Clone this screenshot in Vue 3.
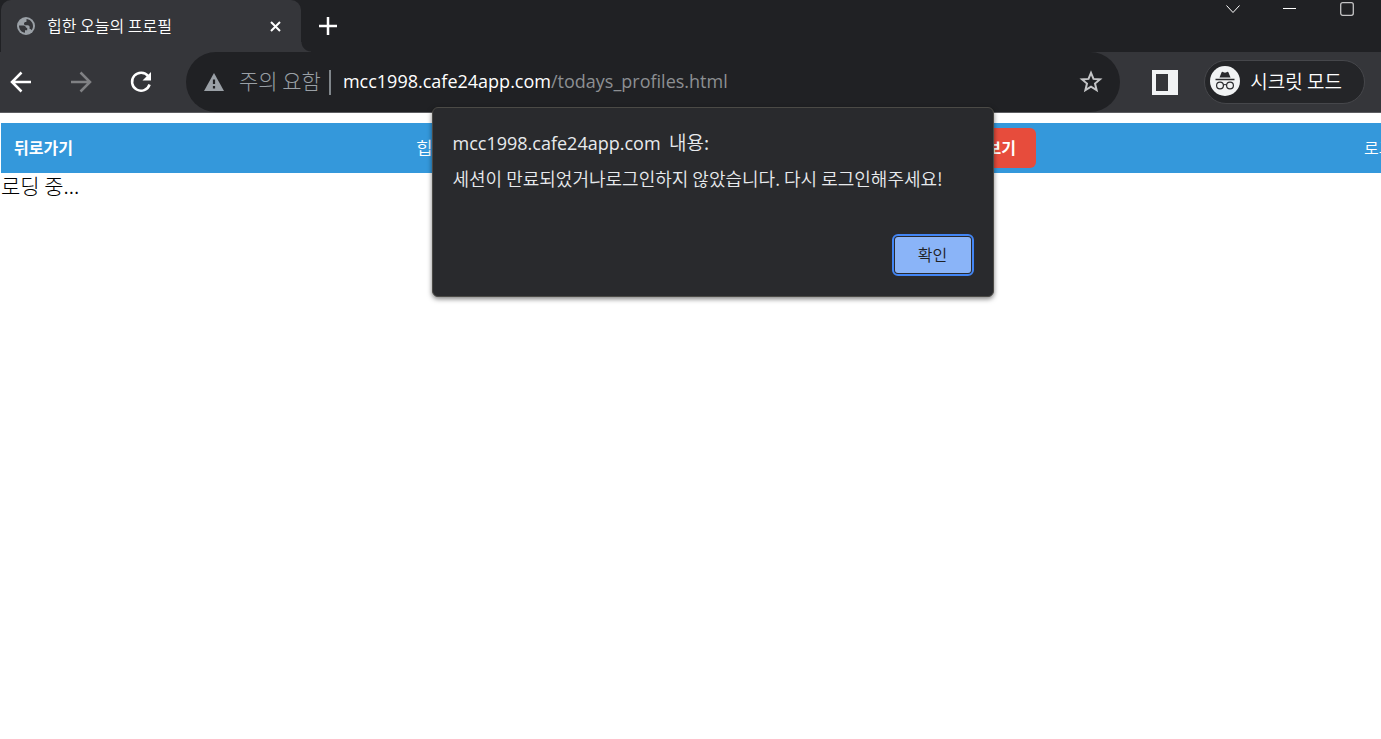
<template>
    <div class="browser">
        <header class="tab-strip">
            <div class="tab">
                <svg class="globe" viewBox="0 0 18 18" aria-hidden="true">
                    <circle cx="9" cy="9" r="9" fill="#9aa0a6" />
                    <path d="M2 8.500h4.500c1.500 0 2.500 1 2.500 2.300h1.200v2.400H8v2.600C4.600 15.500 2 12.500 2 8.500z" fill="#35363a" />
                    <path d="M9.500 2c3.500.2 6.500 3.200 6.500 7 0 1.600-.5 3-1.400 4.200-.3-.8-1-1.300-2-1.300V10c0-1-.8-1.800-1.800-1.800H8.500C7.500 8.200 7 7.500 7 6.700c0-1 .7-1.700 1.700-1.700.6 0 .8-.4.800-1z" fill="#35363a" />
                </svg>
                <span class="tab-title">{{ title }}</span>
                <button class="icon-button tab-close" aria-label="탭 닫기">
                    <svg width="11" height="11" viewBox="0 0 11 11"><path d="M1 1l9 9M10 1l-9 9" stroke="#fff" stroke-width="2" /></svg>
                </button>
            </div>
            <button class="icon-button new-tab" aria-label="새 탭">
                <svg width="18" height="18" viewBox="0 0 18 18"><path d="M9 0v18M0 9h18" stroke="#fff" stroke-width="2.500" /></svg>
            </button>
            <div class="window-controls">
                <button class="icon-button" aria-label="탭 검색">
                    <svg width="14" height="14" viewBox="0 0 14 14"><path d="M.5 3.500l6.500 7 6.500-7" fill="none" stroke="#fff" /></svg>
                </button>
                <button class="icon-button" aria-label="최소화">
                    <svg width="14" height="14" viewBox="0 0 14 14"><path d="M0 6.500h13" stroke="#fff" /></svg>
                </button>
                <button class="icon-button" aria-label="최대화">
                    <svg width="14" height="14" viewBox="0 0 14 14"><rect x=".7" y=".7" width="12.600" height="12.600" rx="2" fill="none" stroke="#c4c4c5" stroke-width="1.300" /></svg>
                </button>
            </div>
        </header>

        <div class="toolbar">
            <div class="history">
                <button class="icon-button" aria-label="뒤로">
                    <svg width="22" height="22" viewBox="0 0 22 22"><path d="M21 11H2.500M11.500 1.500L2 11l9.500 9.500" fill="none" stroke="#fff" stroke-width="2.500" /></svg>
                </button>
                <button class="icon-button" aria-label="앞으로" disabled>
                    <svg width="22" height="22" viewBox="0 0 22 22"><path d="M1 11h18.500M10.500 1.500L20 11l-9.500 9.500" fill="none" stroke="#808184" stroke-width="2.500" /></svg>
                </button>
                <button class="icon-button" aria-label="새로고침">
                    <svg width="22" height="22" viewBox="0 0 22 22">
                        <path d="M18.200 5.200A9 9 0 1 0 19.600 13.500" fill="none" stroke="#fff" stroke-width="2.500" />
                        <path d="M21 1v8.500h-8.500z" fill="#fff" />
                    </svg>
                </button>
            </div>
            <div class="address-bar">
                <svg class="warning" width="20" height="18" viewBox="0 0 20 18" aria-hidden="true">
                    <path d="M10 0l10 18H0z" fill="#9aa0a6" />
                    <path d="M10 6.500v4.500M10 13v2.500" stroke="#202124" stroke-width="2.200" />
                </svg>
                <span class="security">주의 요함</span>
                <span class="divider"></span>
                <span class="url">{{ host }}<span class="path">/todays_profiles.html</span></span>
                <button class="icon-button" aria-label="북마크에 추가">
                    <svg width="24" height="24" viewBox="0 0 24 24"><path d="M12 2.800l2.500 6.100 6.500.5-5 4.200 1.600 6.500L12 16.600l-5.600 3.500L8 13.600 3 9.400l6.500-.5z" fill="none" stroke="#c4c5c7" stroke-width="2" /></svg>
                </button>
            </div>
            <button class="icon-button side-panel" aria-label="측면 패널">
                <svg width="26" height="25" viewBox="0 0 26 25"><path d="M0 0h26v25H0zM4 4v17h12V4z" fill="#f1f3f4" fill-rule="evenodd" /></svg>
            </button>
            <button class="incognito">
                <svg width="30" height="30" viewBox="0 0 30 30" aria-hidden="true">
                    <circle cx="15" cy="15" r="15" fill="#f1f3f4" />
                    <path d="M9.500 11.500l2-5c.2-.6.700-.8 1.300-.6l2.200.8 2.200-.8c.6-.2 1.100 0 1.300.6l2 5z" fill="#292a2d" />
                    <path d="M5.500 13.500h19" stroke="#292a2d" stroke-width="1.500" />
                    <g fill="none" stroke="#292a2d" stroke-width="1.200">
                        <circle cx="10" cy="19.500" r="3.400" />
                        <circle cx="20" cy="19.500" r="3.400" />
                        <path d="M13.400 19q1.600-1 3.200 0" />
                    </g>
                </svg>
                시크릿 모드
            </button>
        </div>

        <main class="page">
            <nav class="site-nav">
                <a href="#" class="back">뒤로가기</a>
                <span class="heading">{{ title }}</span>
                <button class="view">프로필 보기</button>
                <a href="#" class="logout">로그아웃</a>
            </nav>
            <p class="loading">로딩 중...</p>
        </main>

        <div v-if="alertOpen" class="alert" role="alertdialog" aria-labelledby="alert-title" aria-describedby="alert-text">
            <h1 id="alert-title"><span class="host">{{ host }}</span>&nbsp; 내용:</h1>
            <p id="alert-text">세션이 만료되었거나로그인하지 않았습니다. 다시 로그인해주세요!</p>
            <button class="confirm" @click="alertOpen = false">확인</button>
        </div>
    </div>
</template>

<script setup>
import { ref } from 'vue'

const title = '힙한 오늘의 프로필'
const host = 'mcc1998.cafe24app.com'
const alertOpen = ref(true)
</script>

<style>
body {
    margin: 0;
    background: #fff;
}
</style>

<style scoped>
.browser {
    position: relative;
    min-height: 100vh;
    overflow: hidden;
    font-family: "Noto Sans CJK KR", sans-serif;
    font-weight: 350;
    color: #fff;
}
button {
    font-family: inherit;
    font-weight: inherit;
    cursor: pointer;
}
svg {
    display: block;
}
.icon-button {
    padding: 0;
    border: 0;
    background: none;
}
.tab-strip {
    display: flex;
    height: 52px;
    background: #202124;
}
.tab {
    position: relative;
    display: flex;
    align-items: center;
    box-sizing: border-box;
    width: 300px;
    margin-left: 1px;
    padding: 0 20px 0 16px;
    border-radius: 10px 10px 0 0;
    background: #35363a;
}
/* curved foot of the active tab */
.tab::after {
    content: "";
    position: absolute;
    bottom: 0;
    left: 100%;
    width: 10px;
    height: 10px;
    background: radial-gradient(circle at 100% 0, transparent 9px, #35363a 10px);
}
.globe {
    width: 18px;
    height: 18px;
}
.tab-title {
    flex: 1;
    margin-left: 12px;
    padding-bottom: 2px;
    font-size: 16px;
    line-height: 24px;
}
.new-tab {
    align-self: center;
    margin-left: 18px;
}
.window-controls {
    display: flex;
    align-items: flex-start;
    gap: 43px;
    margin-left: auto;
    padding: 2px 27px 0 0;
}
.toolbar {
    display: flex;
    align-items: center;
    height: 60px;
    padding: 0 16px 0 10px;
    border-bottom: 1px solid #5c5d61;
    background: #35363a;
}
.history {
    display: flex;
    gap: 38px;
    margin-right: 34px;
}
.address-bar {
    display: flex;
    flex: 1;
    align-items: center;
    box-sizing: border-box;
    height: 60px;
    padding: 0 17px 0 18px;
    border-radius: 30px;
    background: #202124;
    white-space: nowrap;
}
.security {
    margin-left: 15px;
    padding-bottom: 4px;
    font-size: 21px;
    font-weight: 300;
    color: #9aa0a6;
}
.divider {
    width: 2px;
    height: 25px;
    margin: 0 12px 0 8px;
    background: #80868b;
}
.url {
    flex: 1;
    padding-bottom: 2px;
    font-family: "Open Sans", "Noto Sans CJK KR", sans-serif;
    font-size: 18px;
    font-weight: 400;
}
.path {
    color: #8c8f92;
}
.side-panel {
    margin: 0 26px 0 32px;
}
.incognito {
    display: flex;
    align-items: center;
    gap: 10px;
    height: 44px;
    padding: 0 22px 2px 5px;
    border: 1px solid #46474b;
    border-radius: 22px;
    background: #242528;
    color: #fff;
    font-size: 19px;
    line-height: 24px;
    white-space: nowrap;
}
.page {
    padding: 10px 0 0 1px;
    color: #000;
}
.site-nav {
    display: grid;
    grid-template-columns: 402fr 620fr 389fr;
    grid-template-areas: "back view logout";
    align-items: center;
    box-sizing: border-box;
    height: 50px;
    margin-right: -44px;
    padding: 0 0 0 13px;
    background: #3498db;
    font-size: 16px;
    line-height: 22px;
    color: #fff;
    white-space: nowrap;
}
.site-nav a {
    padding-bottom: 2px;
    color: #fff;
    text-decoration: none;
}
.site-nav .back {
    grid-area: back;
    font-weight: 700;
}
.heading {
    grid-area: view;
    padding-bottom: 2px;
    font-size: 18px;
}
.view {
    grid-area: view;
    justify-self: end;
    height: 40px;
    padding: 0 20px 2px;
    border: 0;
    border-radius: 6px;
    background: #e74c3c;
    font-size: 16px;
    font-weight: 700;
    color: #fff;
}
.site-nav .logout {
    grid-area: logout;
    justify-self: end;
    padding-right: 2px;
}
.loading {
    margin: 0;
    font-size: 21px;
    font-weight: 300;
    line-height: 24px;
}
.alert {
    position: absolute;
    top: 107px;
    left: calc(50% + 22px);
    display: flex;
    flex-direction: column;
    box-sizing: border-box;
    width: 562px;
    padding: 20px;
    border: 1px solid #4b4a46;
    border-radius: 6px;
    background: #292a2d;
    box-shadow: 0 2px 5px rgba(0, 0, 0, 0.5);
    color: #e8eaed;
    transform: translateX(-50%);
}
.alert h1 {
    margin: 0;
    font-size: 19px;
    font-weight: 350;
    line-height: 28px;
}
.host {
    font-family: "Open Sans", sans-serif;
    font-size: 18px;
    font-weight: 400;
}
.alert p {
    margin: 8px 0 46px;
    font-size: 18px;
    line-height: 26px;
    white-space: nowrap;
}
.confirm {
    align-self: flex-end;
    width: 76px;
    height: 36px;
    margin: 0 2px 3px 0;
    padding: 0 0 2px;
    border: 0;
    border-radius: 3px;
    outline: 2px solid #4285f4;
    outline-offset: 1px;
    background: #8ab4f8;
    font-size: 16px;
    color: #202124;
}
</style>
